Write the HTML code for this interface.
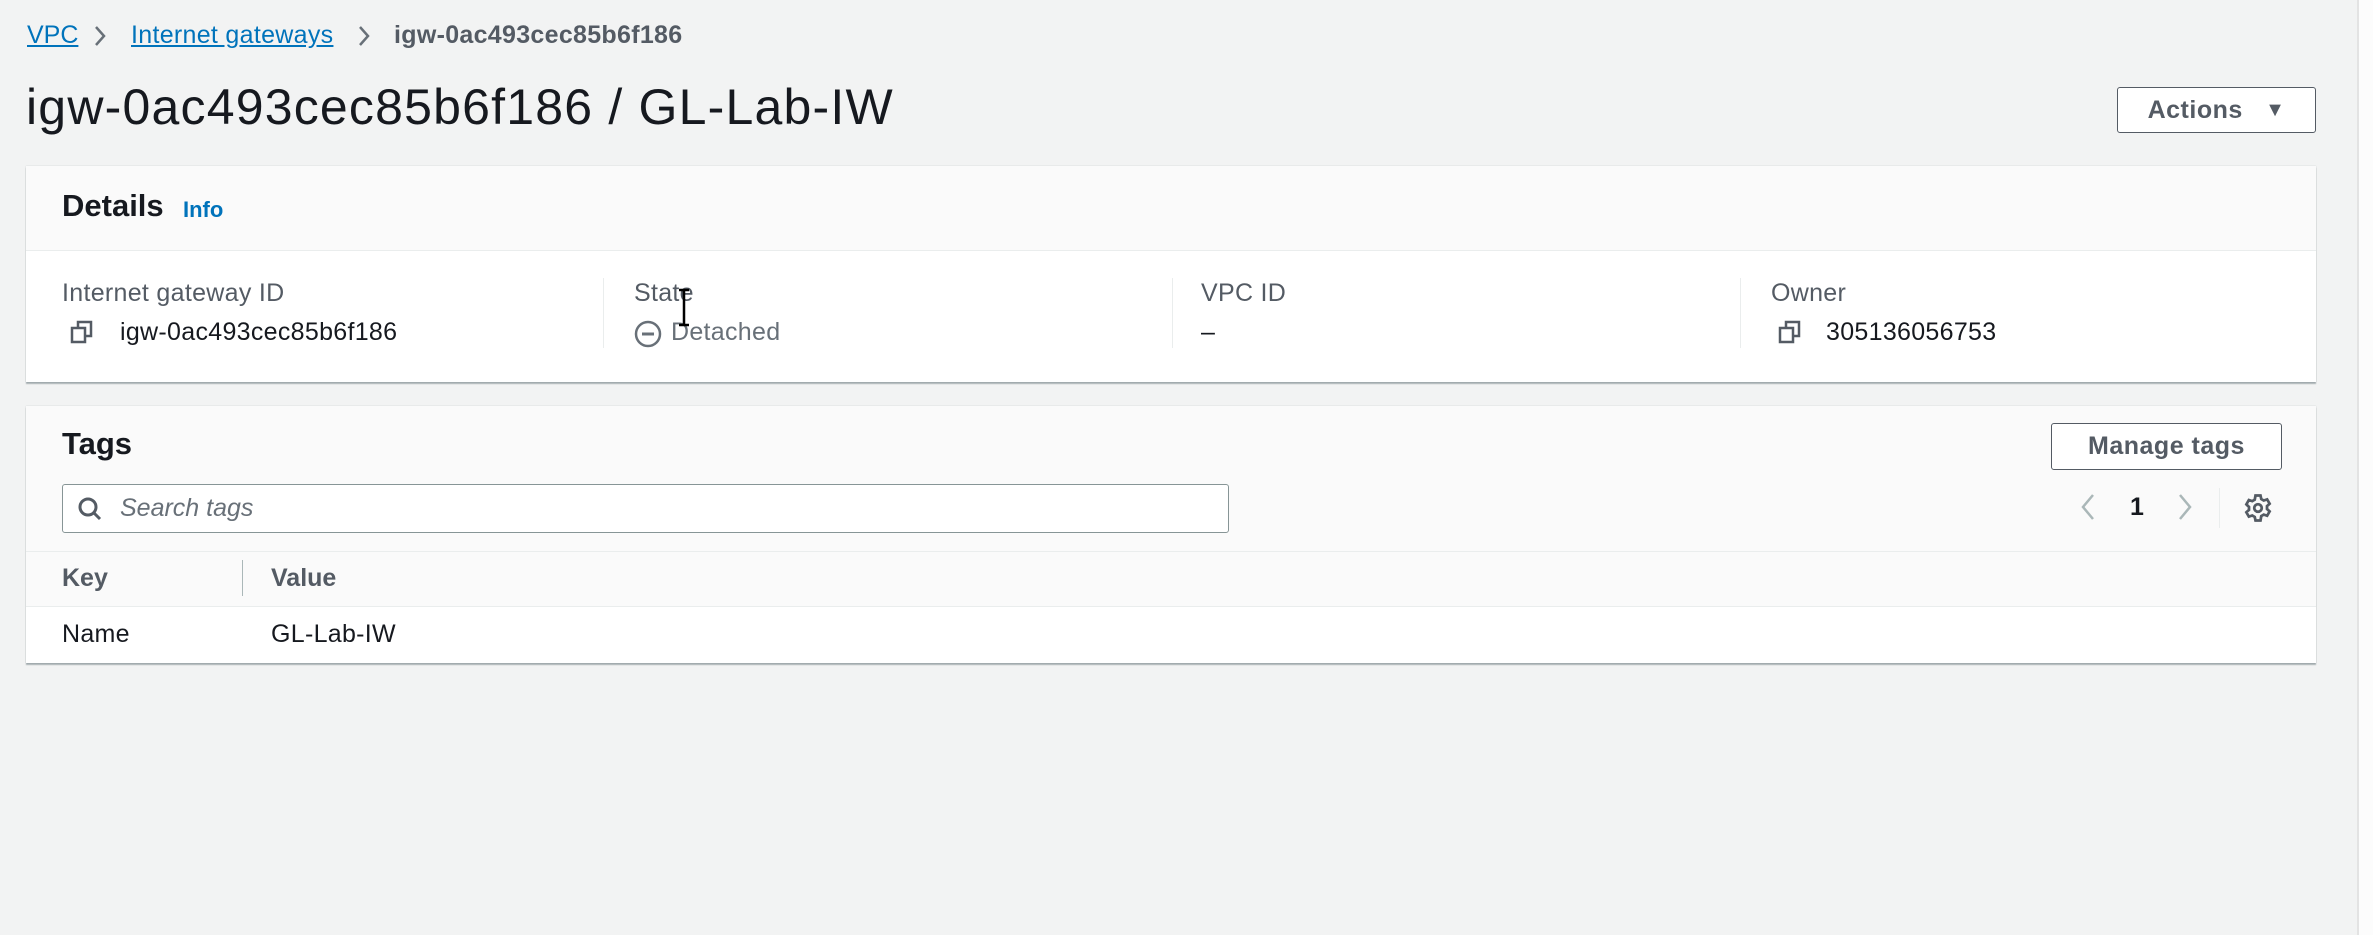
<!DOCTYPE html>
<html><head><style>
*{box-sizing:border-box;margin:0;padding:0}
body{width:2373px;height:935px;background:#f2f3f3;font-family:"Liberation Sans",sans-serif;color:#16191f;position:relative;overflow:hidden}
.a{position:absolute;white-space:nowrap}
.card{position:absolute;left:26px;width:2290px;background:#fff;box-shadow:0 2px 1px rgba(0,28,36,.3),0 0 1px rgba(0,28,36,.2)}
.hdr{background:#fafafa;border-bottom:1px solid #eaeded}
.lbl{font-size:25px;color:#545b64;letter-spacing:0.3px}
.val{font-size:25px;color:#16191f;letter-spacing:0.3px}
.btn{position:absolute;border:1.5px solid #545b64;border-radius:3px;background:#fff;font-weight:bold;font-size:25px;color:#545b64;display:flex;align-items:center;justify-content:center;letter-spacing:0.5px}
.div{position:absolute;width:1px;background:#eaeded}
</style></head><body>
<div class="a" style="left:27px;top:21px;font-size:25px;color:#0073bb;text-decoration:underline">VPC</div>
<svg class="a" style="left:93px;top:24px" width="14" height="24" viewBox="0 0 14 24"><path d="M3 3l8 9-8 9" fill="none" stroke="#687078" stroke-width="2.5"/></svg>
<div class="a" style="left:131px;top:21px;font-size:25px;color:#0073bb;text-decoration:underline;letter-spacing:0.3px">Internet gateways</div>
<svg class="a" style="left:357px;top:24px" width="14" height="24" viewBox="0 0 14 24"><path d="M3 3l8 9-8 9" fill="none" stroke="#687078" stroke-width="2.5"/></svg>
<div class="a" style="left:394px;top:21px;font-size:25px;color:#545b64;font-weight:bold;letter-spacing:0.3px">igw-0ac493cec85b6f186</div>
<div class="a" style="left:26px;top:78px;font-size:50px;color:#16191f;letter-spacing:1.2px">igw-0ac493cec85b6f186 / GL-Lab-IW</div>
<div class="btn" style="left:2117px;top:87px;width:199px;height:46px">Actions&nbsp;&nbsp;&nbsp;<span style="font-size:20px">▼</span></div>

<div class="card" style="top:166px;height:216px">
 <div class="hdr" style="height:85px"></div>
</div>
<div class="a" style="left:62px;top:188px;font-size:31px;font-weight:bold">Details</div>
<div class="a" style="left:183px;top:197px;font-size:22px;font-weight:bold;color:#0073bb">Info</div>
<div class="div" style="left:603px;top:278px;height:70px"></div>
<div class="div" style="left:1172px;top:278px;height:70px"></div>
<div class="div" style="left:1740px;top:278px;height:70px"></div>
<div class="a lbl" style="left:62px;top:279px">Internet gateway ID</div>
<svg class="a" style="left:70px;top:320px" width="24" height="24" viewBox="0 0 24 24" fill="none" stroke="#545b64" stroke-width="2.5"><rect x="2" y="8" width="13" height="14"/><path d="M8 8V2h13v14h-6"/></svg>
<div class="a val" style="left:120px;top:318px">igw-0ac493cec85b6f186</div>
<div class="a lbl" style="left:634px;top:279px">State</div>
<svg class="a" style="left:634px;top:320px" width="28" height="28" viewBox="0 0 28 28"><circle cx="14" cy="14" r="12" fill="none" stroke="#687078" stroke-width="2.5"/><path d="M8 14h12" stroke="#687078" stroke-width="3"/></svg>
<div class="a val" style="left:671px;top:318px;color:#687078">Detached</div>
<svg class="a" style="left:678px;top:288px" width="12" height="40" viewBox="0 0 12 40"><path d="M1 2h10M6 2v35M1 37h10" stroke="#000" stroke-width="2.5"/></svg>
<div class="a lbl" style="left:1201px;top:279px">VPC ID</div>
<div class="a val" style="left:1201px;top:318px">–</div>
<div class="a lbl" style="left:1771px;top:279px">Owner</div>
<svg class="a" style="left:1778px;top:320px" width="24" height="24" viewBox="0 0 24 24" fill="none" stroke="#545b64" stroke-width="2.5"><rect x="2" y="8" width="13" height="14"/><path d="M8 8V2h13v14h-6"/></svg>
<div class="a val" style="left:1826px;top:318px">305136056753</div>

<div class="card" style="top:406px;height:257px">
 <div style="background:#fafafa;height:146px;border-bottom:1px solid #eaeded"></div>
 <div style="background:#fafafa;height:55px;border-bottom:1px solid #eaeded"></div>
</div>
<div class="a" style="left:62px;top:426px;font-size:31px;font-weight:bold">Tags</div>
<div class="btn" style="left:2051px;top:423px;width:231px;height:47px">Manage tags</div>
<div class="a" style="left:62px;top:484px;width:1167px;height:49px;border:1.5px solid #879596;border-radius:3px;background:#fff"></div>
<svg class="a" style="left:77px;top:496px" width="26" height="26" viewBox="0 0 26 26" fill="none" stroke="#545b64" stroke-width="3"><circle cx="11" cy="11" r="8"/><path d="M17 17l6 6"/></svg>
<div class="a" style="left:120px;top:494px;font-size:25px;font-style:italic;color:#687078">Search tags</div>
<svg class="a" style="left:2079px;top:492px" width="18" height="30" viewBox="0 0 18 30"><path d="M14 3L4 15l10 12" fill="none" stroke="#aab7b8" stroke-width="2.5"/></svg>
<div class="a" style="left:2130px;top:493px;font-size:25px;font-weight:bold">1</div>
<svg class="a" style="left:2176px;top:492px" width="18" height="30" viewBox="0 0 18 30"><path d="M4 3l10 12L4 27" fill="none" stroke="#aab7b8" stroke-width="2.5"/></svg>
<div class="div" style="left:2219px;top:488px;height:40px"></div>
<svg class="a" style="left:2243px;top:493px" width="30" height="30" viewBox="0 0 24 24" fill="none" stroke="#545b64" stroke-width="2.2"><circle cx="12" cy="12" r="3"/><path d="M10 2h4l.6 2.8 2 1.2 2.7-.9 2 3.5-2.1 1.9v2.3l2.1 1.9-2 3.5-2.7-.9-2 1.2L14 22h-4l-.6-2.8-2-1.2-2.7.9-2-3.5 2.1-1.9v-2.3L2.7 9.1l2-3.5 2.7.9 2-1.2z"/></svg>
<div class="a" style="left:62px;top:564px;font-size:25px;font-weight:bold;color:#545b64">Key</div>
<div class="div" style="left:242px;top:560px;height:36px;background:#aab7b8"></div>
<div class="a" style="left:271px;top:564px;font-size:25px;font-weight:bold;color:#545b64">Value</div>
<div class="a val" style="left:62px;top:620px">Name</div>
<div class="a val" style="left:271px;top:620px">GL-Lab-IW</div>
<div class="a" style="left:2357px;top:0;width:16px;height:935px;background:#fcfcfc;border-left:2px solid #e3e3e3"></div>
</body></html>
